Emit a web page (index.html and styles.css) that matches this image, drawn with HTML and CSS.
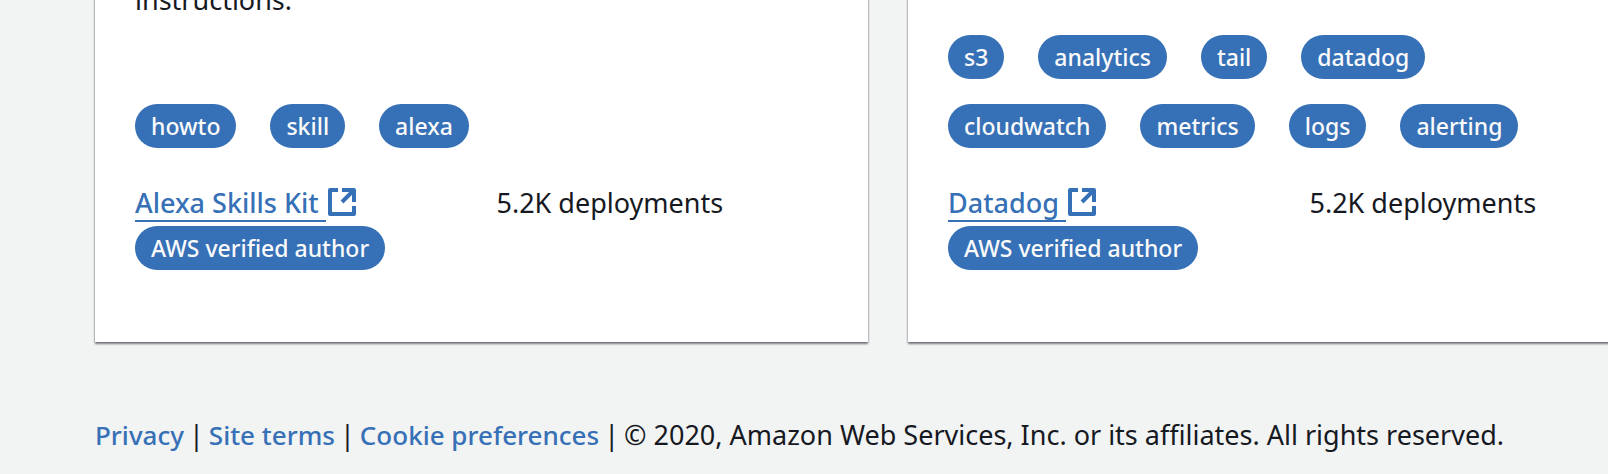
FILE: index.html
```html
<!DOCTYPE html>
<html lang="en">
<head>
<meta charset="utf-8">
<title>Applications</title>
<link rel="stylesheet" href="styles.css">
</head>
<body>
<main class="cards">
  <article class="card">
    <p class="description">instructions.</p>
    <ul class="tags">
      <li class="pill">howto</li>
      <li class="pill">skill</li>
      <li class="pill">alexa</li>
    </ul>
    <div class="meta">
      <div class="author">
        <a class="author-link" href="#"><span class="author-name">Alexa Skills Kit </span><svg class="external" viewBox="0 0 28 28" aria-hidden="true"><path d="M10 2H2v24h24v-8M14 2h12v12M14 14 25 3"/></svg></a>
        <span class="pill">AWS verified author</span>
      </div>
      <span class="deployments">5.2K deployments</span>
    </div>
  </article>
  <article class="card">
    <ul class="tags">
      <li class="pill">s3</li>
      <li class="pill">analytics</li>
      <li class="pill">tail</li>
      <li class="pill">datadog</li>
      <li class="pill">cloudwatch</li>
      <li class="pill">metrics</li>
      <li class="pill">logs</li>
      <li class="pill">alerting</li>
    </ul>
    <div class="meta">
      <div class="author">
        <a class="author-link" href="#"><span class="author-name">Datadog </span><svg class="external" viewBox="0 0 28 28" aria-hidden="true"><path d="M10 2H2v24h24v-8M14 2h12v12M14 14 25 3"/></svg></a>
        <span class="pill">AWS verified author</span>
      </div>
      <span class="deployments">5.2K deployments</span>
    </div>
  </article>
</main>
<footer class="footer">
  <a href="#">Privacy</a>
  <span>|</span>
  <a href="#">Site terms</a>
  <span>|</span>
  <a href="#">Cookie preferences</a>
  <span>|</span>
  <span>© 2020, Amazon Web Services, Inc. or its affiliates. All rights reserved.</span>
</footer>
</body>
</html>
```

FILE: styles.css
```css
* {
  box-sizing: border-box;
}

body {
  margin: 0;
  overflow: hidden;
  background: #f2f3f3;
  color: #16191f;
  font-family: "Noto Sans", "Open Sans", sans-serif;
  font-size: 27px;
  line-height: 44px;
}

a {
  color: #3670b6;
  text-decoration: none;
}

.cards {
  display: grid;
  grid-template-columns: 1fr 1fr;
  gap: 40px;
  margin: -60px -73px 0 95px;
}

.card {
  display: flex;
  flex-direction: column;
  padding: 38px 40px 72px;
  background: #fff;
  box-shadow: 0 2px 2px rgba(0, 7, 22, 0.5), 0 0 2px rgba(0, 7, 22, 0.3);
}

.description {
  margin: 0;
}

.tags {
  display: flex;
  flex-wrap: wrap;
  gap: 25px 34px;
  margin: auto 0 0;
  padding: 57px 73px 0 0;
  list-style: none;
}

.pill {
  padding: 0 16px;
  border-radius: 22px;
  background: #3670b6;
  color: #fafafa;
  font-size: 23px;
  font-weight: 500;
  line-height: 44px;
}

.meta {
  display: grid;
  grid-template-columns: 1fr 1fr;
  gap: 30px;
  margin-top: 34px;
  line-height: 42px;
}

.author {
  display: flex;
  flex-direction: column;
  align-items: flex-start;
}

.author-link {
  display: flex;
  align-items: center;
  gap: 2px;
  margin-bottom: 4px;
  font-weight: 500;
}

.author-name {
  height: 40px;
  border-bottom: 2px solid;
  white-space: pre;
}

.external {
  width: 28px;
  height: 28px;
  fill: none;
  stroke: currentColor;
  stroke-width: 4;
  stroke-linejoin: round;
}

.footer {
  display: flex;
  align-items: baseline;
  gap: 5px;
  margin-top: 71px;
  padding-left: 95px;
  white-space: nowrap;
}

.footer a {
  font-size: 26px;
  font-weight: 500;
}
```
